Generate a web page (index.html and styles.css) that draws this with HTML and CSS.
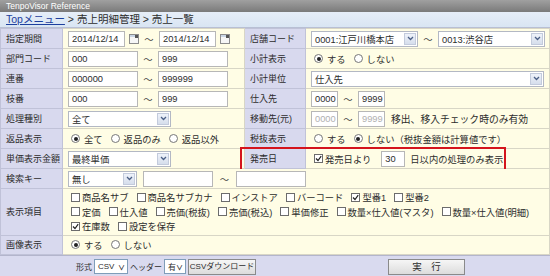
FILE: index.html
```html
<!DOCTYPE html>
<html>
    <head>
        <title>TenpoVisor Reference</title>
        <meta charset="utf-8">
        <link rel="stylesheet" href="styles.css">
    </head>
    <body>
        <div class="titlebar">TenpoVisor Reference</div>
        <div class="crumbs"><a href="#">Topメニュー</a> &gt; 売上明細管理 &gt; 売上一覧</div>

        <table class="form">
            <colgroup>
                <col class="c-label1">
                <col class="c-value1">
                <col class="c-label2">
                <col>
            </colgroup>
            <tr>
                <th>指定期間</th>
                <td>
                    <div class="fld">
                        <span class="box w-date">2014/12/14</span>
                        <svg class="cal" width="10" height="10" viewBox="0 0 10 10"><rect x="0.5" y="0.5" width="9" height="9" fill="#f6f6f6" stroke="#8c8c8c"/><rect x="1" y="1" width="8" height="2" fill="#c9d6e6"/><rect x="6" y="1" width="3" height="3" fill="#555"/></svg>
                        <span class="tilde">～</span>
                        <span class="box w-date">2014/12/14</span>
                        <svg class="cal" width="10" height="10" viewBox="0 0 10 10"><rect x="0.5" y="0.5" width="9" height="9" fill="#f6f6f6" stroke="#8c8c8c"/><rect x="1" y="1" width="8" height="2" fill="#c9d6e6"/><rect x="6" y="1" width="3" height="3" fill="#555"/></svg>
                    </div>
                </td>
                <th>店舗コード</th>
                <td>
                    <div class="fld">
                        <span class="sel w-store">0001:江戸川橋本店<span class="arr"><svg width="7" height="5" viewBox="0 0 7 5"><path d="M1 1 L3.5 3.5 L6 1" fill="none" stroke="#4a5f86" stroke-width="1.3"/></svg></span></span>
                        <span class="tilde">～</span>
                        <span class="sel w-store">0013:渋谷店<span class="arr"><svg width="7" height="5" viewBox="0 0 7 5"><path d="M1 1 L3.5 3.5 L6 1" fill="none" stroke="#4a5f86" stroke-width="1.3"/></svg></span></span>
                    </div>
                </td>
            </tr>
            <tr>
                <th>部門コード</th>
                <td>
                    <div class="fld">
                        <span class="box w-code">000</span>
                        <span class="tilde">～</span>
                        <span class="box w-code">999</span>
                    </div>
                </td>
                <th>小計表示</th>
                <td>
                    <div class="fld">
                        <span class="radio on"></span><span class="opt">する</span>
                        <span class="radio"></span><span class="opt">しない</span>
                    </div>
                </td>
            </tr>
            <tr>
                <th>連番</th>
                <td>
                    <div class="fld">
                        <span class="box w-code">000000</span>
                        <span class="tilde">～</span>
                        <span class="box w-code">999999</span>
                    </div>
                </td>
                <th>小計単位</th>
                <td>
                    <div class="fld">
                        <span class="sel w-full">仕入先<span class="arr"><svg width="7" height="5" viewBox="0 0 7 5"><path d="M1 1 L3.5 3.5 L6 1" fill="none" stroke="#4a5f86" stroke-width="1.3"/></svg></span></span>
                    </div>
                </td>
            </tr>
            <tr>
                <th>枝番</th>
                <td>
                    <div class="fld">
                        <span class="box w-code">000</span>
                        <span class="tilde">～</span>
                        <span class="box w-code">999</span>
                    </div>
                </td>
                <th>仕入先</th>
                <td>
                    <div class="fld">
                        <span class="box w-short">0000</span>
                        <span class="tilde">～</span>
                        <span class="box w-short">9999</span>
                    </div>
                </td>
            </tr>
            <tr>
                <th>処理種別</th>
                <td>
                    <div class="fld">
                        <span class="sel w-kind">全て<span class="arr"><svg width="7" height="5" viewBox="0 0 7 5"><path d="M1 1 L3.5 3.5 L6 1" fill="none" stroke="#4a5f86" stroke-width="1.3"/></svg></span></span>
                    </div>
                </td>
                <th>移動先(元)</th>
                <td>
                    <div class="fld">
                        <span class="box w-short off">0000</span>
                        <span class="tilde">～</span>
                        <span class="box w-short off">9999</span>
                        <span class="note">移出、移入チェック時のみ有効</span>
                    </div>
                </td>
            </tr>
            <tr>
                <th>返品表示</th>
                <td>
                    <div class="fld">
                        <span class="radio on"></span><span class="opt">全て</span>
                        <span class="radio"></span><span class="opt">返品のみ</span>
                        <span class="radio"></span><span class="opt">返品以外</span>
                    </div>
                </td>
                <th>税抜表示</th>
                <td>
                    <div class="fld">
                        <span class="radio"></span><span class="opt">する</span>
                        <span class="radio on"></span><span class="opt">しない（税抜金額は計算値です）</span>
                    </div>
                </td>
            </tr>
            <tr>
                <th>単価表示金額</th>
                <td>
                    <div class="fld">
                        <span class="sel w-kind">最終単価<span class="arr"><svg width="7" height="5" viewBox="0 0 7 5"><path d="M1 1 L3.5 3.5 L6 1" fill="none" stroke="#4a5f86" stroke-width="1.3"/></svg></span></span>
                    </div>
                </td>
                <th>発売日</th>
                <td>
                    <div class="fld">
                        <span class="check on"><svg width="7" height="7" viewBox="0 0 7 7"><path d="M1 3.5 L3 5.5 L6.2 1.2" fill="none" stroke="#222" stroke-width="1.2"/></svg></span>
                        <span class="opt">発売日より</span>
                        <span class="box w-days">30</span>
                        <span class="opt">日以内の処理のみ表示</span>
                    </div>
                    <div class="redbox"></div>
                </td>
            </tr>
            <tr>
                <th>検索キー</th>
                <td colspan="3">
                    <div class="fld">
                        <span class="sel w-key">無し<span class="arr"><svg width="7" height="5" viewBox="0 0 7 5"><path d="M1 1 L3.5 3.5 L6 1" fill="none" stroke="#4a5f86" stroke-width="1.3"/></svg></span></span>
                        <span class="box w-code gap-l"></span>
                        <span class="tilde t-key">～</span>
                        <span class="box w-code"></span>
                    </div>
                </td>
            </tr>
            <tr class="items">
                <th>表示項目</th>
                <td colspan="3">
                    <div class="fld">
                        <span class="check"></span><span class="opt">商品名サブ</span>
                        <span class="check"></span><span class="opt">商品名サブカナ</span>
                        <span class="check"></span><span class="opt">インストア</span>
                        <span class="check"></span><span class="opt">バーコード</span>
                        <span class="check on"><svg width="7" height="7" viewBox="0 0 7 7"><path d="M1 3.5 L3 5.5 L6.2 1.2" fill="none" stroke="#222" stroke-width="1.2"/></svg></span><span class="opt">型番1</span>
                        <span class="check"></span><span class="opt">型番2</span>
                    </div>
                    <div class="fld">
                        <span class="check"></span><span class="opt">定価</span>
                        <span class="check"></span><span class="opt">仕入値</span>
                        <span class="check"></span><span class="opt">売価(税抜)</span>
                        <span class="check"></span><span class="opt">売価(税込)</span>
                        <span class="check"></span><span class="opt">単価修正</span>
                        <span class="check"></span><span class="opt">数量×仕入値(マスタ)</span>
                        <span class="check"></span><span class="opt">数量×仕入値(明細)</span>
                    </div>
                    <div class="fld">
                        <span class="check on"><svg width="7" height="7" viewBox="0 0 7 7"><path d="M1 3.5 L3 5.5 L6.2 1.2" fill="none" stroke="#222" stroke-width="1.2"/></svg></span><span class="opt">在庫数</span>
                        <span class="check"></span><span class="opt">設定を保存</span>
                    </div>
                </td>
            </tr>
            <tr class="last">
                <th>画像表示</th>
                <td colspan="3">
                    <div class="fld">
                        <span class="radio on"></span><span class="opt">する</span>
                        <span class="radio"></span><span class="opt">しない</span>
                    </div>
                </td>
            </tr>
        </table>

        <div class="actions">
            <div class="act-left">
                <span class="act-label">形式</span>
                <span class="dd w-csv">CSV<span class="chev">∨</span></span>
                <span class="act-label">ヘッダー</span>
                <span class="dd w-hdr">有<span class="chev">∨</span></span>
                <span class="btn w-dl">CSVダウンロード</span>
            </div>
            <div class="act-right">
                <span class="btn w-run">実　行</span>
            </div>
        </div>
    </body>
</html>
```

FILE: styles.css
```css
* {
    margin: 0;
    padding: 0;
    box-sizing: border-box;
}
body {
    width: 550px;
    height: 276px;
    overflow: hidden;
    font-family: "Liberation Sans", "Noto Sans CJK JP", sans-serif;
    font-size: 9.3px;
    color: #2c2c2c;
    background: #fff;
}

/* header */
.titlebar {
    height: 12px;
    line-height: 12px;
    padding-left: 6px;
    font-size: 8.5px;
    color: #fff;
    background: linear-gradient(#a0a0a0, #7a7a7a);
}
.crumbs {
    height: 16px;
    line-height: 15px;
    padding-left: 6px;
    font-size: 10.5px;
    background: linear-gradient(#e6eef8, #d9e5f3);
    border-bottom: 1px solid #b8bfd4;
}
.crumbs a {
    color: #1d3f9e;
}

/* form table */
.form {
    width: 550px;
    border-collapse: collapse;
    table-layout: fixed;
}
.c-label1 {
    width: 62px;
}
.c-value1 {
    width: 182px;
}
.c-label2 {
    width: 61px;
}
.form th {
    height: 20px;
    padding-left: 5px;
    font-size: 9px;
    font-weight: normal;
    text-align: left;
    white-space: nowrap;
    background: #d8d9ee;
    border: 1px solid #c0c2d8;
}
.form td {
    position: relative;
    padding-left: 5px;
    background: #fffde5;
    border: 1px solid #d8d6c6;
}
.items td {
    padding-top: 1px;
    padding-bottom: 1px;
}
.last th {
    height: 19px;
}
.fld {
    display: flex;
    align-items: center;
    white-space: nowrap;
}
.items .fld {
    height: 14.5px;
}

/* fields */
.box {
    display: inline-block;
    height: 16px;
    line-height: 14px;
    padding-left: 3px;
    background: #fff;
    border: 1px solid #b7b7b7;
}
.box.off {
    color: #b0b0b0;
}
.w-date {
    width: 57px;
}
.w-code {
    width: 70px;
}
.w-short {
    width: 27px;
}
.w-days {
    width: 24px;
    margin: 0 5px;
}
.gap-l {
    margin-left: 6px;
}
.cal {
    margin-left: 4px;
}
.tilde {
    width: 20px;
    text-align: center;
    color: #444;
}
.t-key {
    width: 23px;
}
.sel {
    display: inline-flex;
    align-items: center;
    justify-content: space-between;
    height: 16px;
    padding-left: 3px;
    background: #fff;
    border: 1px solid #b3b8c4;
}
.arr {
    display: flex;
    align-items: center;
    justify-content: center;
    width: 12px;
    height: 12px;
    margin-right: 1px;
    background: linear-gradient(#eef2fa, #d6deec);
    border: 1px solid #c3cbdc;
}
.w-store {
    width: 107px;
}
.w-full {
    width: 233px;
}
.w-kind {
    width: 103px;
}
.w-key {
    width: 69px;
}
.note {
    margin-left: 6px;
    font-size: 9.8px;
}

/* radios and checkboxes */
.radio {
    display: inline-block;
    position: relative;
    width: 9px;
    height: 9px;
    margin: 0 4px 0 3px;
    border: 1px solid #777;
    border-radius: 50%;
    background: #fff;
}
.radio.on::after {
    content: "";
    position: absolute;
    left: 1.5px;
    top: 1.5px;
    width: 4px;
    height: 4px;
    border-radius: 50%;
    background: #222;
}
.check {
    display: inline-flex;
    align-items: center;
    justify-content: center;
    width: 9px;
    height: 9px;
    margin: 0 2px 0 3px;
    border: 1px solid #6c6c6c;
    background: #fff;
}
.opt {
    margin-right: 5px;
}

/* highlighted row */
.redbox {
    position: absolute;
    left: -66px;
    top: -2px;
    width: 266px;
    height: 25px;
    border: 2px solid #d4141c;
    pointer-events: none;
}

/* bottom bar */
.actions {
    display: flex;
    height: 23px;
    align-items: center;
    font-size: 8px;
    background: #d9daef;
    border-top: 1px solid #b3b5cc;
}
.act-left {
    display: flex;
    align-items: center;
    width: 330px;
    padding-left: 76px;
}
.act-right {
    display: flex;
    align-items: center;
    padding-left: 58px;
}
.act-label {
    margin-right: 2px;
}
.dd {
    display: inline-flex;
    align-items: center;
    justify-content: space-between;
    height: 15px;
    padding: 0 2px 0 3px;
    margin-right: 2px;
    background: #fff;
    border: 1px solid #7f9db9;
}
.chev {
    font-size: 7px;
    font-weight: bold;
}
.w-csv {
    width: 34px;
}
.w-hdr {
    width: 22px;
}
.btn {
    display: inline-block;
    height: 16px;
    line-height: 14px;
    text-align: center;
    background: linear-gradient(#f6f6f6, #dcdcdc);
    border: 1px solid #8a8a8a;
}
.w-dl {
    width: 68px;
}
.w-run {
    width: 77px;
    font-size: 9.5px;
}
```
